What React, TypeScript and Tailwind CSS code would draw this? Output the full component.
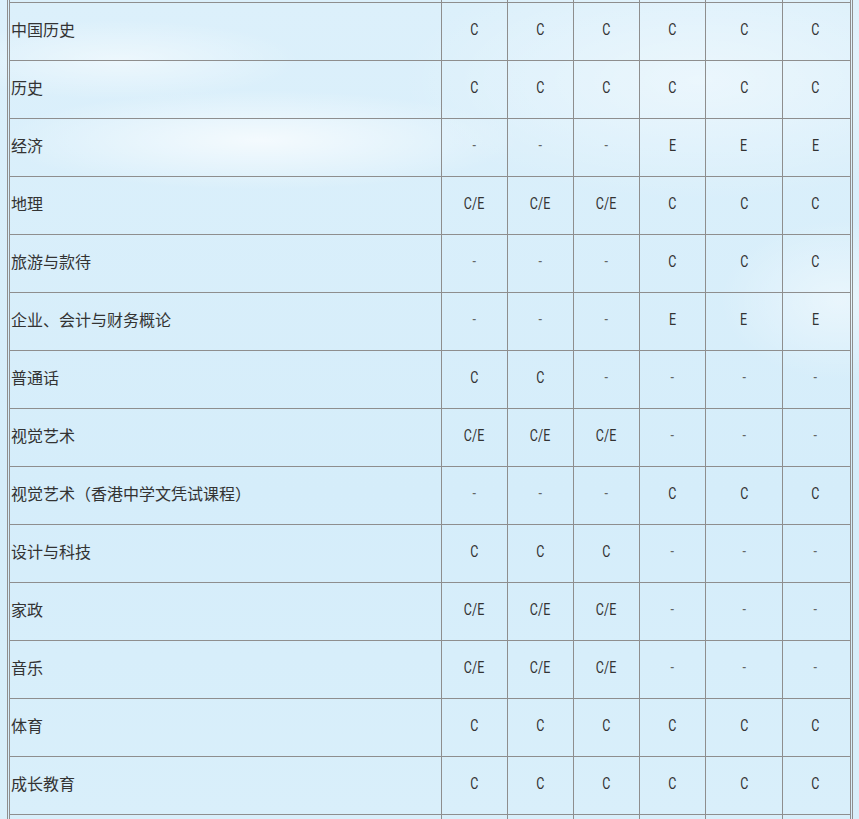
type Row = { name: string; cells: string[] };

const ROWS: Row[] = [
  { name: "中国历史", cells: ["C", "C", "C", "C", "C", "C"] },
  { name: "历史", cells: ["C", "C", "C", "C", "C", "C"] },
  { name: "经济", cells: ["-", "-", "-", "E", "E", "E"] },
  { name: "地理", cells: ["C/E", "C/E", "C/E", "C", "C", "C"] },
  { name: "旅游与款待", cells: ["-", "-", "-", "C", "C", "C"] },
  { name: "企业、会计与财务概论", cells: ["-", "-", "-", "E", "E", "E"] },
  { name: "普通话", cells: ["C", "C", "-", "-", "-", "-"] },
  { name: "视觉艺术", cells: ["C/E", "C/E", "C/E", "-", "-", "-"] },
  { name: "视觉艺术（香港中学文凭试课程）", cells: ["-", "-", "-", "C", "C", "C"] },
  { name: "设计与科技", cells: ["C", "C", "C", "-", "-", "-"] },
  { name: "家政", cells: ["C/E", "C/E", "C/E", "-", "-", "-"] },
  { name: "音乐", cells: ["C/E", "C/E", "C/E", "-", "-", "-"] },
  { name: "体育", cells: ["C", "C", "C", "C", "C", "C"] },
  { name: "成长教育", cells: ["C", "C", "C", "C", "C", "C"] },
];

const COLS = "grid grid-cols-[432px_66px_66px_66px_66px_77px_69px]";

// 上下被截断的行：只画边框
function EdgeRow({ top, height }: { top?: boolean; height: string }) {
  return (
    <div className={`${COLS} ${height}`}>
      {Array.from({ length: 7 }).map((_, i) => (
        <div
          key={i}
          className={
            "border-l border-[#8e8e8e] " +
            (top ? "" : "border-t ") +
            (i === 6 ? "border-r" : "")
          }
        />
      ))}
    </div>
  );
}

function ValueCell({ value, last }: { value: string; last?: boolean }) {
  return (
    <div
      className={
        "flex items-center justify-center border-l border-t border-[#8e8e8e] pb-[4px] " +
        (last ? "border-r pr-[2px]" : "")
      }
    >
      <span
        className={
          "inline-block scale-x-[0.78] font-['Roboto',sans-serif] text-[16px] leading-none " +
          (value === "-" ? "text-[#666]" : "text-[#333]")
        }
      >
        {value}
      </span>
    </div>
  );
}

export default function App() {
  return (
    <div className="h-[819px] overflow-hidden bg-[#d7eefa] bg-[radial-gradient(ellipse_260px_50px_at_260px_140px,rgba(255,255,255,0.7),transparent),radial-gradient(ellipse_180px_40px_at_120px_60px,rgba(255,255,255,0.5),transparent),radial-gradient(ellipse_300px_120px_at_700px_80px,rgba(255,255,255,0.45),transparent),radial-gradient(ellipse_120px_80px_at_840px_300px,rgba(255,255,255,0.45),transparent),linear-gradient(180deg,#dcf0fb,#d5edfa_60%,#d9effa)]">
      <div className="ml-[7px] w-[846px] border-x border-[#8e8e8e] px-px">
        <EdgeRow top height="h-[2px]" />
        {ROWS.map((row) => (
          <div key={row.name} className={`${COLS} h-[58px]`}>
            <div className="flex items-center border-l border-t border-[#8e8e8e] pb-[5px] pl-[1px] font-['Noto_Sans_CJK_SC',sans-serif] text-[16px] leading-none text-[#333]">
              {row.name}
            </div>
            {row.cells.map((v, i) => (
              <ValueCell key={i} value={v} last={i === row.cells.length - 1} />
            ))}
          </div>
        ))}
        <EdgeRow height="h-[20px]" />
      </div>
    </div>
  );
}
